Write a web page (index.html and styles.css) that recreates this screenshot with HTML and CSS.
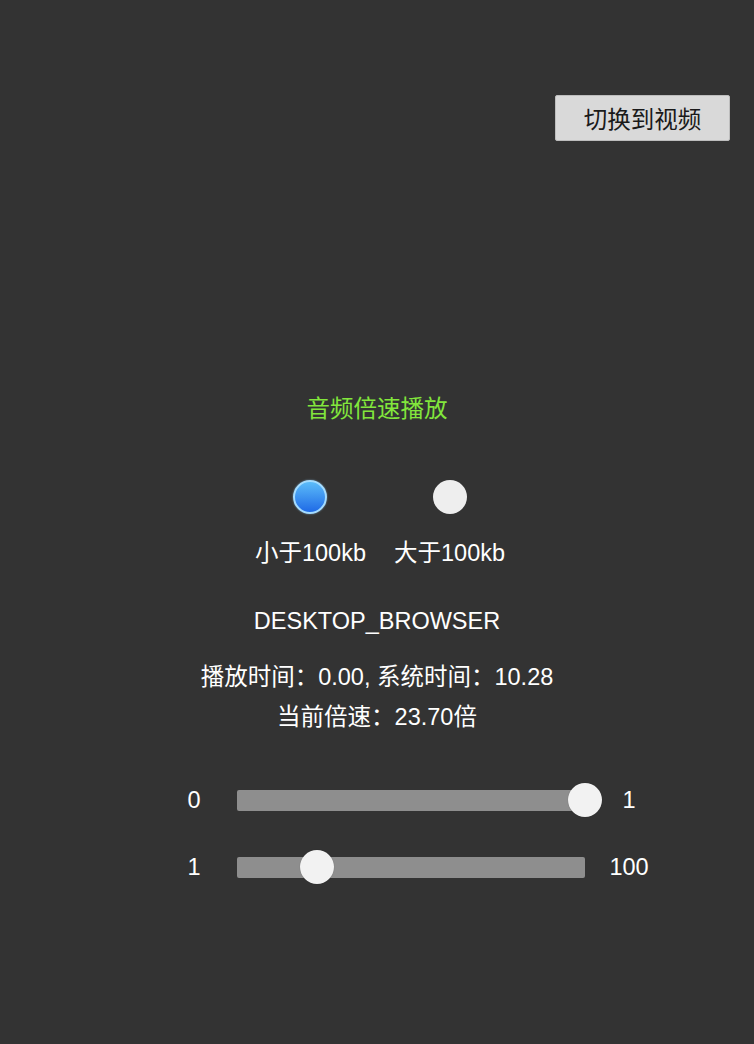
FILE: index.html
```html
<!DOCTYPE html>
<html lang="zh-CN">
<head>
<meta charset="utf-8">
<title>音频倍速播放</title>
<link rel="stylesheet" href="styles.css">
</head>
<body>
<div class="page">
  <div class="topbar">
    <button class="switch-btn">切换到视频</button>
  </div>
  <main class="main">
    <h1 class="title">音频倍速播放</h1>
    <div class="radios">
      <label class="radio-item">
        <span class="radio radio-on"></span>
        <span class="radio-label">小于100kb</span>
      </label>
      <label class="radio-item">
        <span class="radio radio-off"></span>
        <span class="radio-label">大于100kb</span>
      </label>
    </div>
    <div class="platform">DESKTOP_BROWSER</div>
    <div class="info">
      <div class="info-line">播放时间：0.00, 系统时间：10.28</div>
      <div class="info-line">当前倍速：23.70倍</div>
    </div>
    <div class="sliders">
      <div class="slider-row">
        <span class="s-min">0</span>
        <div class="track"><span class="thumb" style="left:100%"></span></div>
        <span class="s-max">1</span>
      </div>
      <div class="slider-row">
        <span class="s-min">1</span>
        <div class="track"><span class="thumb" style="left:22.93%"></span></div>
        <span class="s-max">100</span>
      </div>
    </div>
  </main>
</div>
</body>
</html>
```

FILE: styles.css
```css
html, body {
  margin: 0;
  padding: 0;
  background: #333333;
}
body {
  font-family: "Liberation Sans", "Noto Sans CJK SC", sans-serif;
  color: #ffffff;
  width: 754px;
  height: 1044px;
  overflow: hidden;
}
.page {
  display: flex;
  flex-direction: column;
}
.topbar {
  display: flex;
  justify-content: flex-end;
  padding: 95px 24px 0 0;
}
.switch-btn {
  width: 175px;
  height: 46px;
  background: #d9d9d9;
  border: 1px solid #bdbdbd;
  border-radius: 2px;
  font-family: "Liberation Sans", "Noto Sans CJK SC", sans-serif;
  font-size: 23.5px;
  color: #1a1a1a;
  padding: 0;
}
.main {
  display: flex;
  flex-direction: column;
  align-items: center;
}
.title {
  margin: 253px 0 0 0;
  font-size: 23.5px;
  font-weight: normal;
  line-height: 30px;
  color: #82e63c;
}
.radios {
  margin-top: 56px;
  display: flex;
  gap: 28px;
  padding-left: 6px;
}
.radio-item {
  display: flex;
  flex-direction: column;
  align-items: center;
  gap: 24px;
}
.radio {
  width: 34px;
  height: 34px;
  border-radius: 50%;
  box-sizing: border-box;
}
.radio-on {
  background: linear-gradient(#5cbcf9, #1f6ae6);
  border: 2px solid #a5dcff;
  box-shadow: 0 0 2px rgba(160, 215, 255, 0.6);
}
.radio-off {
  background: #eeeeee;
}
.radio-label {
  font-size: 23.5px;
  line-height: 30px;
}
.platform {
  margin-top: 38px;
  font-size: 23.5px;
  line-height: 30px;
}
.info {
  margin-top: 21px;
  display: flex;
  flex-direction: column;
  align-items: center;
}
.info-line {
  font-size: 23.5px;
  line-height: 40px;
}
.sliders {
  margin-top: 46px;
  display: flex;
  flex-direction: column;
  gap: 33px;
  align-self: flex-start;
  margin-left: 174px;
}
.slider-row {
  display: flex;
  align-items: center;
  height: 34px;
}
.s-min, .s-max {
  width: 40px;
  text-align: center;
  font-size: 23.5px;
}
.s-min {
  margin-right: 23px;
}
.s-max {
  margin-left: 24px;
}
.track {
  position: relative;
  width: 348px;
  height: 21px;
  background: #8e8e8e;
  border-radius: 2px;
}
.thumb {
  position: absolute;
  top: 50%;
  width: 34px;
  height: 34px;
  margin: -17px 0 0 -17px;
  border-radius: 50%;
  background: #f2f2f2;
  box-shadow: 0 0 1px rgba(0,0,0,0.3);
}
```
